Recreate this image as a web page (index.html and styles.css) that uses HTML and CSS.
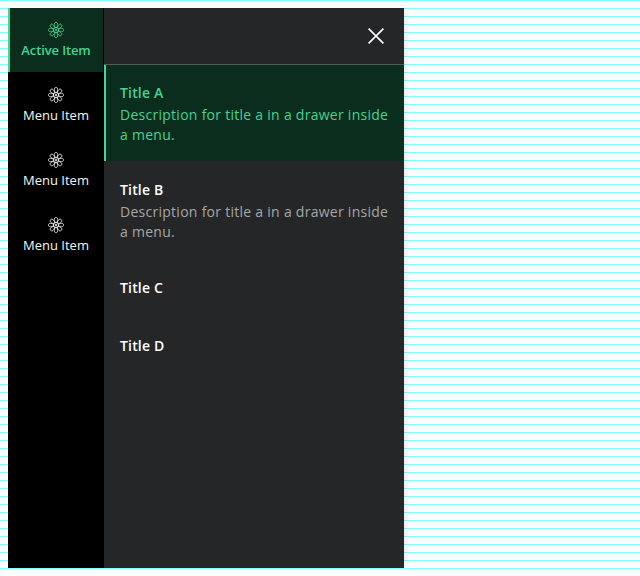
FILE: index.html
```html
<!DOCTYPE html>
<html lang="en">
<head>
<meta charset="utf-8">
<title>Menu drawer</title>
<link rel="stylesheet" href="styles.css">
</head>
<body>
<svg width="0" height="0" class="defs">
  <symbol id="atom" viewBox="0 0 16 16">
    <g fill="none" stroke="currentColor" stroke-width=".85">
      <path id="petal" d="M7.500 6C6.200 3.900 5.500.5 8 .5S9.800 3.900 8.500 6"/>
      <use href="#petal" transform="rotate(45 8 8)"/>
      <use href="#petal" transform="rotate(90 8 8)"/>
      <use href="#petal" transform="rotate(135 8 8)"/>
      <use href="#petal" transform="rotate(180 8 8)"/>
      <use href="#petal" transform="rotate(225 8 8)"/>
      <use href="#petal" transform="rotate(270 8 8)"/>
      <use href="#petal" transform="rotate(315 8 8)"/>
      <circle cx="8" cy="8" r="2.600" stroke-width=".9"/>
    </g>
    <circle cx="8" cy="8" r="1.1" fill="currentColor"/>
  </symbol>
</svg>
<div class="menu">
  <nav class="rail">
    <a class="rail-item active"><svg class="icon"><use href="#atom"/></svg><span>Active Item</span></a>
    <a class="rail-item"><svg class="icon"><use href="#atom"/></svg><span>Menu Item</span></a>
    <a class="rail-item"><svg class="icon"><use href="#atom"/></svg><span>Menu Item</span></a>
    <a class="rail-item"><svg class="icon"><use href="#atom"/></svg><span>Menu Item</span></a>
  </nav>
  <section class="drawer">
    <header class="drawer-header">
      <svg class="close" viewBox="0 0 16 16"><path d="M.6.6l14.8 14.8M15.4.6L.6 15.4" fill="none" stroke="currentColor" stroke-width="1.6"/></svg>
    </header>
    <div class="entries">
      <div class="entry active"><div class="title">Title A</div><div class="description">Description for title a in a drawer inside a menu.</div></div>
      <div class="entry"><div class="title">Title B</div><div class="description">Description for title a in a drawer inside a menu.</div></div>
      <div class="entry short"><div class="title">Title C</div></div>
      <div class="entry short"><div class="title">Title D</div></div>
    </div>
  </section>
</div>
</body>
</html>
```
FILE: styles.css
```css
* { box-sizing: border-box; }
body {
  margin: 0;
  padding: 8px;
  height: 576px;
  overflow: hidden;
  background: repeating-linear-gradient(#7fffff 0 1px, #fff 1px 8px);
  font-family: "Open Sans", sans-serif;
  font-size: 14px;
  color: #fff;
}
.defs { position: absolute; }
.menu { display: flex; width: 396px; height: 560px; }
.rail {
  display: flex;
  flex-direction: column;
  gap: 1px;
  width: 96px;
  padding-right: 1px;
  background: #000;
}
.rail-item {
  display: flex;
  flex-direction: column;
  align-items: center;
  height: 64px;
  padding: 14px 1px 0 0;
  border-left: 2px solid transparent;
  font-size: 13px;
  line-height: 20px;
  color: #f4f4f4;
  white-space: nowrap;
}
.rail-item.active {
  background: #0a2d1d;
  border-color: #46d394;
  color: #46d394;
  font-weight: 600;
  letter-spacing: -.12px;
}
.icon { width: 16px; height: 16px; margin-bottom: 2px; }
.drawer {
  width: 300px;
  background: #252628;
  box-shadow: 0 0 8px rgba(0, 0, 0, .16);
  clip-path: inset(0 -16px 0 0);
}
.drawer-header {
  display: flex;
  align-items: center;
  justify-content: flex-end;
  height: 57px;
  padding-right: 20px;
  border-bottom: 1px solid #55575b;
}
.close { width: 16px; height: 16px; }
.entries { display: flex; flex-direction: column; gap: 1px; }
.entry {
  height: 96px;
  padding: 16px 14px;
  border-left: 2px solid transparent;
}
.entry.short { height: 57px; padding-top: 17px; }
.title { font-weight: 600; line-height: 24px; letter-spacing: .16px; }
.description { line-height: 20px; letter-spacing: .27px; color: #a5a6a9; margin-right: -2px; }
.entry.active { background: #0a2d1d; border-color: #46d394; }
.entry.active .title, .entry.active .description { color: #46d394; }
```
